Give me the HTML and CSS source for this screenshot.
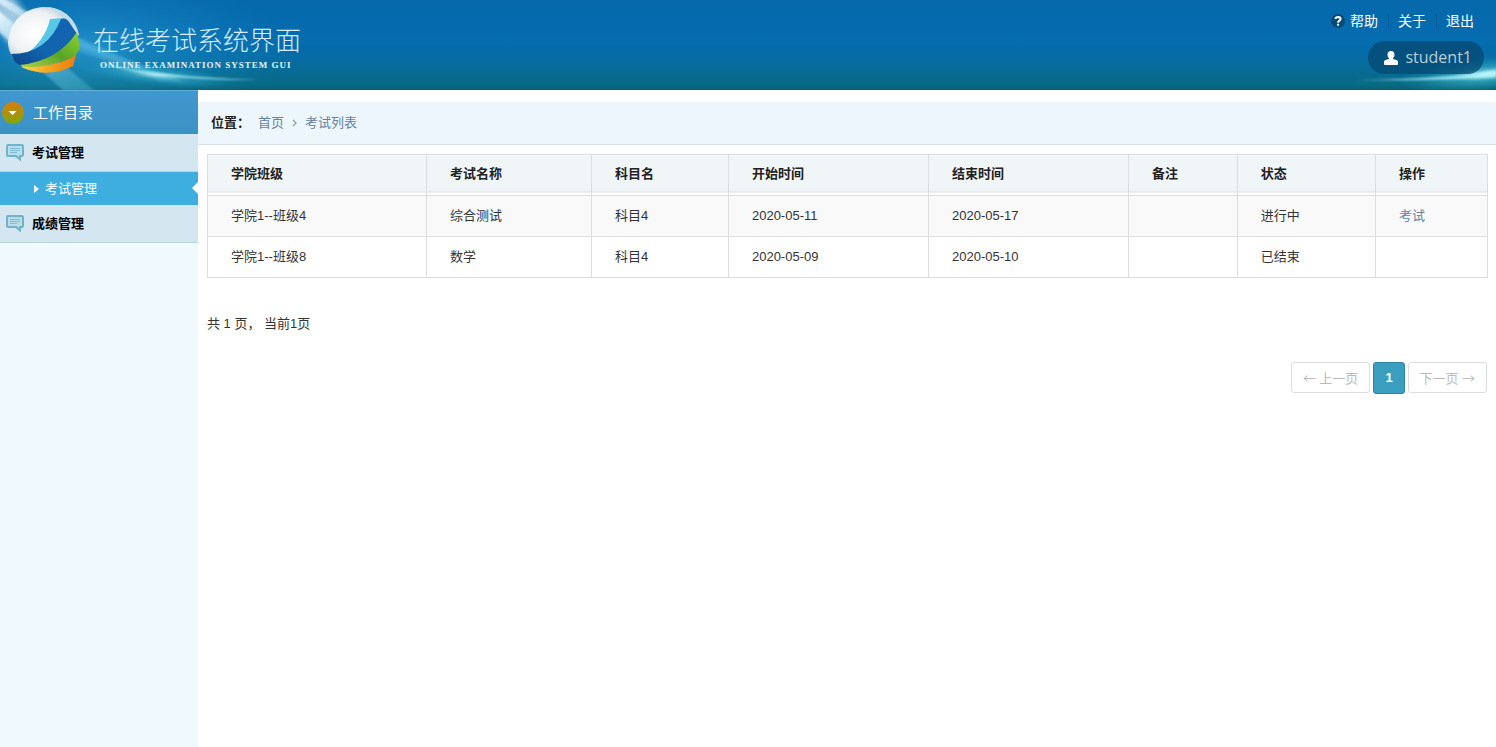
FILE: index.html
```html
<!DOCTYPE html>
<html lang="zh-CN">
<head>
<meta charset="utf-8">
<title>在线考试系统界面</title>
<link rel="stylesheet" href="styles.css">
</head>
<body>
<header class="top">
  <svg class="rays rays-left" viewBox="0 0 320 90" aria-hidden="true">
    <defs>
      <filter id="soft" x="-20%" y="-50%" width="140%" height="200%"><feGaussianBlur stdDeviation="3"/></filter>
      <filter id="fine" x="-20%" y="-50%" width="140%" height="200%"><feGaussianBlur stdDeviation="1.2"/></filter>
      <linearGradient id="ray" x1="0" y1="0" x2="1" y2="1">
        <stop offset="0" stop-color="#fff" stop-opacity=".95"/><stop offset=".4" stop-color="#9adcf5" stop-opacity=".5"/><stop offset="1" stop-color="#4fc0dc" stop-opacity=".3"/>
      </linearGradient>
      <radialGradient id="flare"><stop offset="0" stop-color="#d4ffff" stop-opacity=".9"/><stop offset=".4" stop-color="#49c4d8" stop-opacity=".5"/><stop offset="1" stop-color="#1aa0c8" stop-opacity="0"/></radialGradient>
      <radialGradient id="glow"><stop offset="0" stop-color="#3fb4e4" stop-opacity=".5"/><stop offset="1" stop-color="#1a90d0" stop-opacity="0"/></radialGradient>
    </defs>
    <ellipse cx="85" cy="50" rx="200" ry="80" fill="url(#glow)"/>
    <path d="M-6-3H14L36 30 10 44-6 24Z" fill="#fff" opacity=".6" filter="url(#soft)"/>
    <path d="M-5 8 100 95H68L-5 28Z" fill="url(#ray)" filter="url(#fine)"/>
    <path d="M0-4Q50 28 150 68L140 71Q50 38-6 0Z" fill="url(#ray)" opacity=".8" filter="url(#fine)"/>
    <path d="M76 40 185 82 160 81 70 48Z" fill="#55b8e8" opacity=".4" filter="url(#fine)"/>
    <ellipse cx="156" cy="75" rx="80" ry="11" transform="rotate(6 156 75)" fill="url(#flare)" opacity=".8"/>
    <path d="M90 60Q145 77 262 80 150 81 90 60Z" fill="#c4ffff" opacity=".8" filter="url(#fine)"/>
  </svg>
  <svg class="rays rays-right" viewBox="0 0 200 90" aria-hidden="true">
    <ellipse cx="192" cy="74" rx="90" ry="18" transform="rotate(-5 192 74)" fill="url(#flare)"/>
    <path d="M60 80Q150 79 200 70V77Q150 81 60 80Z" fill="#b9fbff" opacity=".75" filter="url(#fine)"/>
  </svg>
  <div class="brand">
    <svg class="logo" viewBox="0 0 76 70" aria-hidden="true">
      <defs>
        <radialGradient id="ball" cx=".38" cy=".45" r=".6"><stop offset="0" stop-color="#fff"/><stop offset=".6" stop-color="#eef2f4"/><stop offset="1" stop-color="#a9c3d0"/></radialGradient>
        <linearGradient id="blue" x1="1" y1="0" x2="0" y2="1"><stop offset="0" stop-color="#1264b2"/><stop offset=".6" stop-color="#1164ad"/><stop offset="1" stop-color="#0b4484"/></linearGradient>
        <linearGradient id="green" x1="1" y1="0" x2="0" y2="1"><stop offset="0" stop-color="#8fd22e"/><stop offset=".5" stop-color="#58a426"/><stop offset="1" stop-color="#b5d44b"/></linearGradient>
        <linearGradient id="orange"><stop offset="0" stop-color="#ffd84e"/><stop offset=".6" stop-color="#f39b1c"/><stop offset="1" stop-color="#e77e12"/></linearGradient>
      </defs>
      <path d="M38 1C56 1 70 13 73 29L40 54 14 58C6 54 2 44 2 36 4 15 18 2 38 1Z" fill="url(#ball)"/>
      <path d="M40 1C58 2 70 13 73 30L67 22C64 11 54 4 40 1Z" fill="#c4ddea"/>
      <path d="M44 13 58 12Q50 37 16 51 39 36 44 13Z" fill="#59c7e6"/>
      <path d="M55 13Q60 11 63 16L71 28Q53 55 15 60L9 56 5 48Q41 48 55 13Z" fill="url(#blue)"/>
      <path d="M71 26 74 42 69 51Q43 61 18 62L14 59Q52 55 71 26Z" fill="url(#green)"/>
      <path d="M70 49 67 60Q42 73 15 61 49 62 70 49Z" fill="url(#orange)"/>
    </svg>
    <div class="brand-text">
      <h1 class="brand-name">在线考试系统界面</h1>
      <p class="brand-sub">ONLINE EXAMINATION SYSTEM GUI</p>
    </div>
  </div>
  <div class="account">
    <nav class="links">
      <a class="link" href="#"><svg class="help" viewBox="0 0 14 14" aria-hidden="true"><circle cx="7" cy="7" r="7" fill="#084975"/><path d="M4.500 5Q4.700 2.900 7.200 2.900 9.600 3 9.600 5 9.500 6.200 8.200 6.900 7.100 7.500 7.100 8.700M7.100 9.800V11.800" fill="none" stroke="#fff" stroke-width="2"/></svg>帮助</a>
      <a class="link" href="#">关于</a>
      <a class="link" href="#">退出</a>
    </nav>
    <div class="user"><svg class="user-icon" viewBox="0 0 14 14" aria-hidden="true"><path d="M7 0C9.400 0 10.500 1.500 10.500 3.800 10.500 5.500 9.800 6.500 9 7.200V8L12.500 9Q14 9.500 14 11V13Q14 14 13 14H1Q0 14 0 13V11Q0 9.500 1.500 9L5 8V7.200C4.200 6.500 3.500 5.500 3.500 3.800 3.500 1.500 4.600 0 7 0Z" fill="#fff"/></svg>student1</div>
  </div>
</header>
<div class="shell">
  <aside class="side">
    <h2 class="side-title"><svg class="dial" viewBox="0 0 22 22" aria-hidden="true"><defs><linearGradient id="dial" x2="0" y2="1"><stop offset="0" stop-color="#d87d0c"/><stop offset="1" stop-color="#7fa80c"/></linearGradient></defs><circle cx="11" cy="11" r="11" fill="url(#dial)"/><path d="M6.500 9H14.500L10.500 13Z" fill="#fff"/></svg>工作目录</h2>
    <nav>
      <a class="group" href="#"><svg class="bubble" viewBox="0 0 18 17" aria-hidden="true"><path d="M2 1H16Q17 1 17 2V11Q17 12 16 12H14V15.500L10 12H2Q1 12 1 11V2Q1 1 2 1Z" fill="#b9deeb" stroke="#72b3cc" stroke-width="2"/><path d="M4 4.500H14M4 6.500H14M4 8.500H11" stroke="#80bdd3"/></svg>考试管理</a>
      <a class="sub" href="#"><svg class="caret" viewBox="0 0 5 8" aria-hidden="true"><path d="M0 0 5 4 0 8Z" fill="#fff"/></svg>考试管理</a>
      <a class="group" href="#"><svg class="bubble" viewBox="0 0 18 17" aria-hidden="true"><path d="M2 1H16Q17 1 17 2V11Q17 12 16 12H14V15.500L10 12H2Q1 12 1 11V2Q1 1 2 1Z" fill="#b9deeb" stroke="#72b3cc" stroke-width="2"/><path d="M4 4.500H14M4 6.500H14M4 8.500H11" stroke="#80bdd3"/></svg>成绩管理</a>
    </nav>
  </aside>
  <main class="main">
    <nav class="crumbs">
      <strong class="crumb-label">位置：</strong>
      <a class="crumb" href="#">首页</a>
      <svg class="chevron" viewBox="0 0 5 8" aria-hidden="true"><path d="M1 1 4 4 1 7" fill="none" stroke="#8fa6b8" stroke-width="1.500"/></svg>
      <a class="crumb" href="#">考试列表</a>
    </nav>
    <div class="content">
      <table class="exams">
        <colgroup><col class="c-class"><col class="c-name"><col class="c-subject"><col class="c-date"><col class="c-date"><col class="c-note"><col class="c-state"><col class="c-action"></colgroup>
        <thead><tr><th>学院班级</th><th>考试名称</th><th>科目名</th><th>开始时间</th><th>结束时间</th><th>备注</th><th>状态</th><th>操作</th></tr></thead>
        <tbody>
          <tr><td>学院1--班级4</td><td>综合测试</td><td>科目4</td><td>2020-05-11</td><td>2020-05-17</td><td></td><td>进行中</td><td><a href="#">考试</a></td></tr>
          <tr><td>学院1--班级8</td><td>数学</td><td>科目4</td><td>2020-05-09</td><td>2020-05-10</td><td></td><td>已结束</td><td></td></tr>
        </tbody>
      </table>
      <p class="summary">共 1 页， 当前1页</p>
      <nav class="pager">
        <button class="page" type="button" disabled>← 上一页</button>
        <button class="page current" type="button">1</button>
        <button class="page" type="button" disabled>下一页 →</button>
      </nav>
    </div>
  </main>
</div>
</body>
</html>
```
FILE: styles.css
```css
* { box-sizing: border-box; }
body {
  margin: 0;
  min-height: 100vh;
  display: flex;
  flex-direction: column;
  background: #fff;
  color: #333;
  font: 13px/20px "Liberation Sans", "Noto Sans CJK SC", sans-serif;
}
h1, h2, p { margin: 0; font-weight: 400; }
a { color: #6583a0; text-decoration: none; }
svg { display: block; flex: none; }

.top {
  position: relative;
  height: 90px;
  display: flex;
  justify-content: space-between;
  overflow: hidden;
  background: linear-gradient(#0569ab, #056caf 45%, #056ca8 60%, #086a85 94%, #07606f);
}
.rays { position: absolute; top: 0; height: 90px; }
.rays-left { left: 0; width: 320px; }
.rays-right { right: 0; width: 200px; }
.brand { position: relative; display: flex; gap: 11px; padding: 6px 0 0 6px; }
.logo { width: 76px; height: 70px; }
.brand-text { padding-top: 17px; }
.brand-name { font-size: 26px; line-height: 36px; font-weight: 300; color: #d3ecf9; }
.brand-sub {
  padding-left: 7px;
  font: bold 9px/12px "Liberation Serif", serif;
  letter-spacing: 1px;
  color: #e3f5fc;
}
.account {
  position: relative;
  display: flex;
  flex-direction: column;
  align-items: flex-end;
  gap: 10px;
  padding: 11px 12px 0 0;
}
.links { display: flex; align-items: center; }
.link { display: flex; align-items: center; gap: 5px; padding: 0 10px 0 9px; font-size: 14px; color: #fff; }
.link + .link { border-left: 1px solid #0a5b94; line-height: 14px; }
.help { width: 14px; height: 14px; }
.user {
  display: flex;
  align-items: center;
  gap: 7px;
  height: 33px;
  padding: 0 12px 0 16px;
  border-radius: 17px;
  background: rgba(4, 70, 112, .72);
  color: #b8ceda;
  font: 16px/33px "Open Sans", sans-serif;
}
.user-icon { width: 14px; height: 14px; }

.shell { flex: 1; display: flex; }
.side { width: 198px; flex: none; background: #f0f9fd; }
.side-title {
  display: flex;
  align-items: center;
  gap: 9px;
  height: 44px;
  padding-left: 2px;
  border-top: 1px solid #5fadd9;
  background: linear-gradient(#4197cf, #3a92c4);
  color: #fff;
  font-size: 15px;
}
.dial { width: 22px; height: 22px; }
.group {
  display: flex;
  align-items: center;
  gap: 8px;
  height: 38px;
  padding-left: 6px;
  border-bottom: 1px solid #b7d5df;
  background: #d4e7f0;
  color: #000;
  font-weight: 700;
}
.bubble { width: 18px; height: 17px; }
.sub {
  position: relative;
  display: flex;
  align-items: center;
  gap: 6px;
  height: 33px;
  padding-left: 34px;
  background: #3eaee0;
  color: #fff;
}
.sub::after {
  content: "";
  position: absolute;
  right: 0;
  top: 10px;
  border: 6px solid transparent;
  border-left: 0;
  border-right-color: #fff;
}
.caret { width: 5px; height: 8px; }

.main { flex: 1; min-width: 0; padding-top: 12px; }
.crumbs {
  display: flex;
  align-items: center;
  gap: 8px;
  height: 43px;
  padding-left: 13px;
  border-bottom: 1px solid #d5dfe6;
  background: #edf6fc;
}
.crumb-label { color: #222; }
.chevron { width: 5px; height: 8px; }
.content { padding: 9px 8px 0 9px; }

.exams { width: 100%; table-layout: fixed; border-collapse: collapse; }
.exams th, .exams td { height: 41px; padding: 0 0 0 23px; border: 1px solid #ddd; text-align: left; }
.exams th {
  padding-bottom: 3px;
  color: #222;
  background: linear-gradient(to top, #fff 3px, #ddd 3px, #ddd 4px, #f0f5f7 4px);
}
.exams tbody tr:nth-child(odd) { background: #f9f9f9; }
.c-class { width: 17.1%; }
.c-name { width: 12.9%; }
.c-subject { width: 10.7%; }
.c-date { width: 15.63%; }
.c-note { width: 8.5%; }
.c-state { width: 10.8%; }
.c-action { width: 8.74%; }
.summary { margin-top: 36px; }
.pager { display: flex; justify-content: flex-end; gap: 3px; margin-top: 28px; padding-right: 1px; }
.page {
  height: 31px;
  padding: 0 11px;
  border: 1px solid #ddd;
  border-radius: 3px;
  background: #fff;
  color: #bbb;
  font: inherit;
}
.page:disabled { font-family: "Noto Sans", "Noto Sans CJK SC", sans-serif; }
.page.current {
  height: 32px;
  border-color: #31849b;
  background: #3a9fbf;
  color: #fff;
  font-weight: 700;
}
```
